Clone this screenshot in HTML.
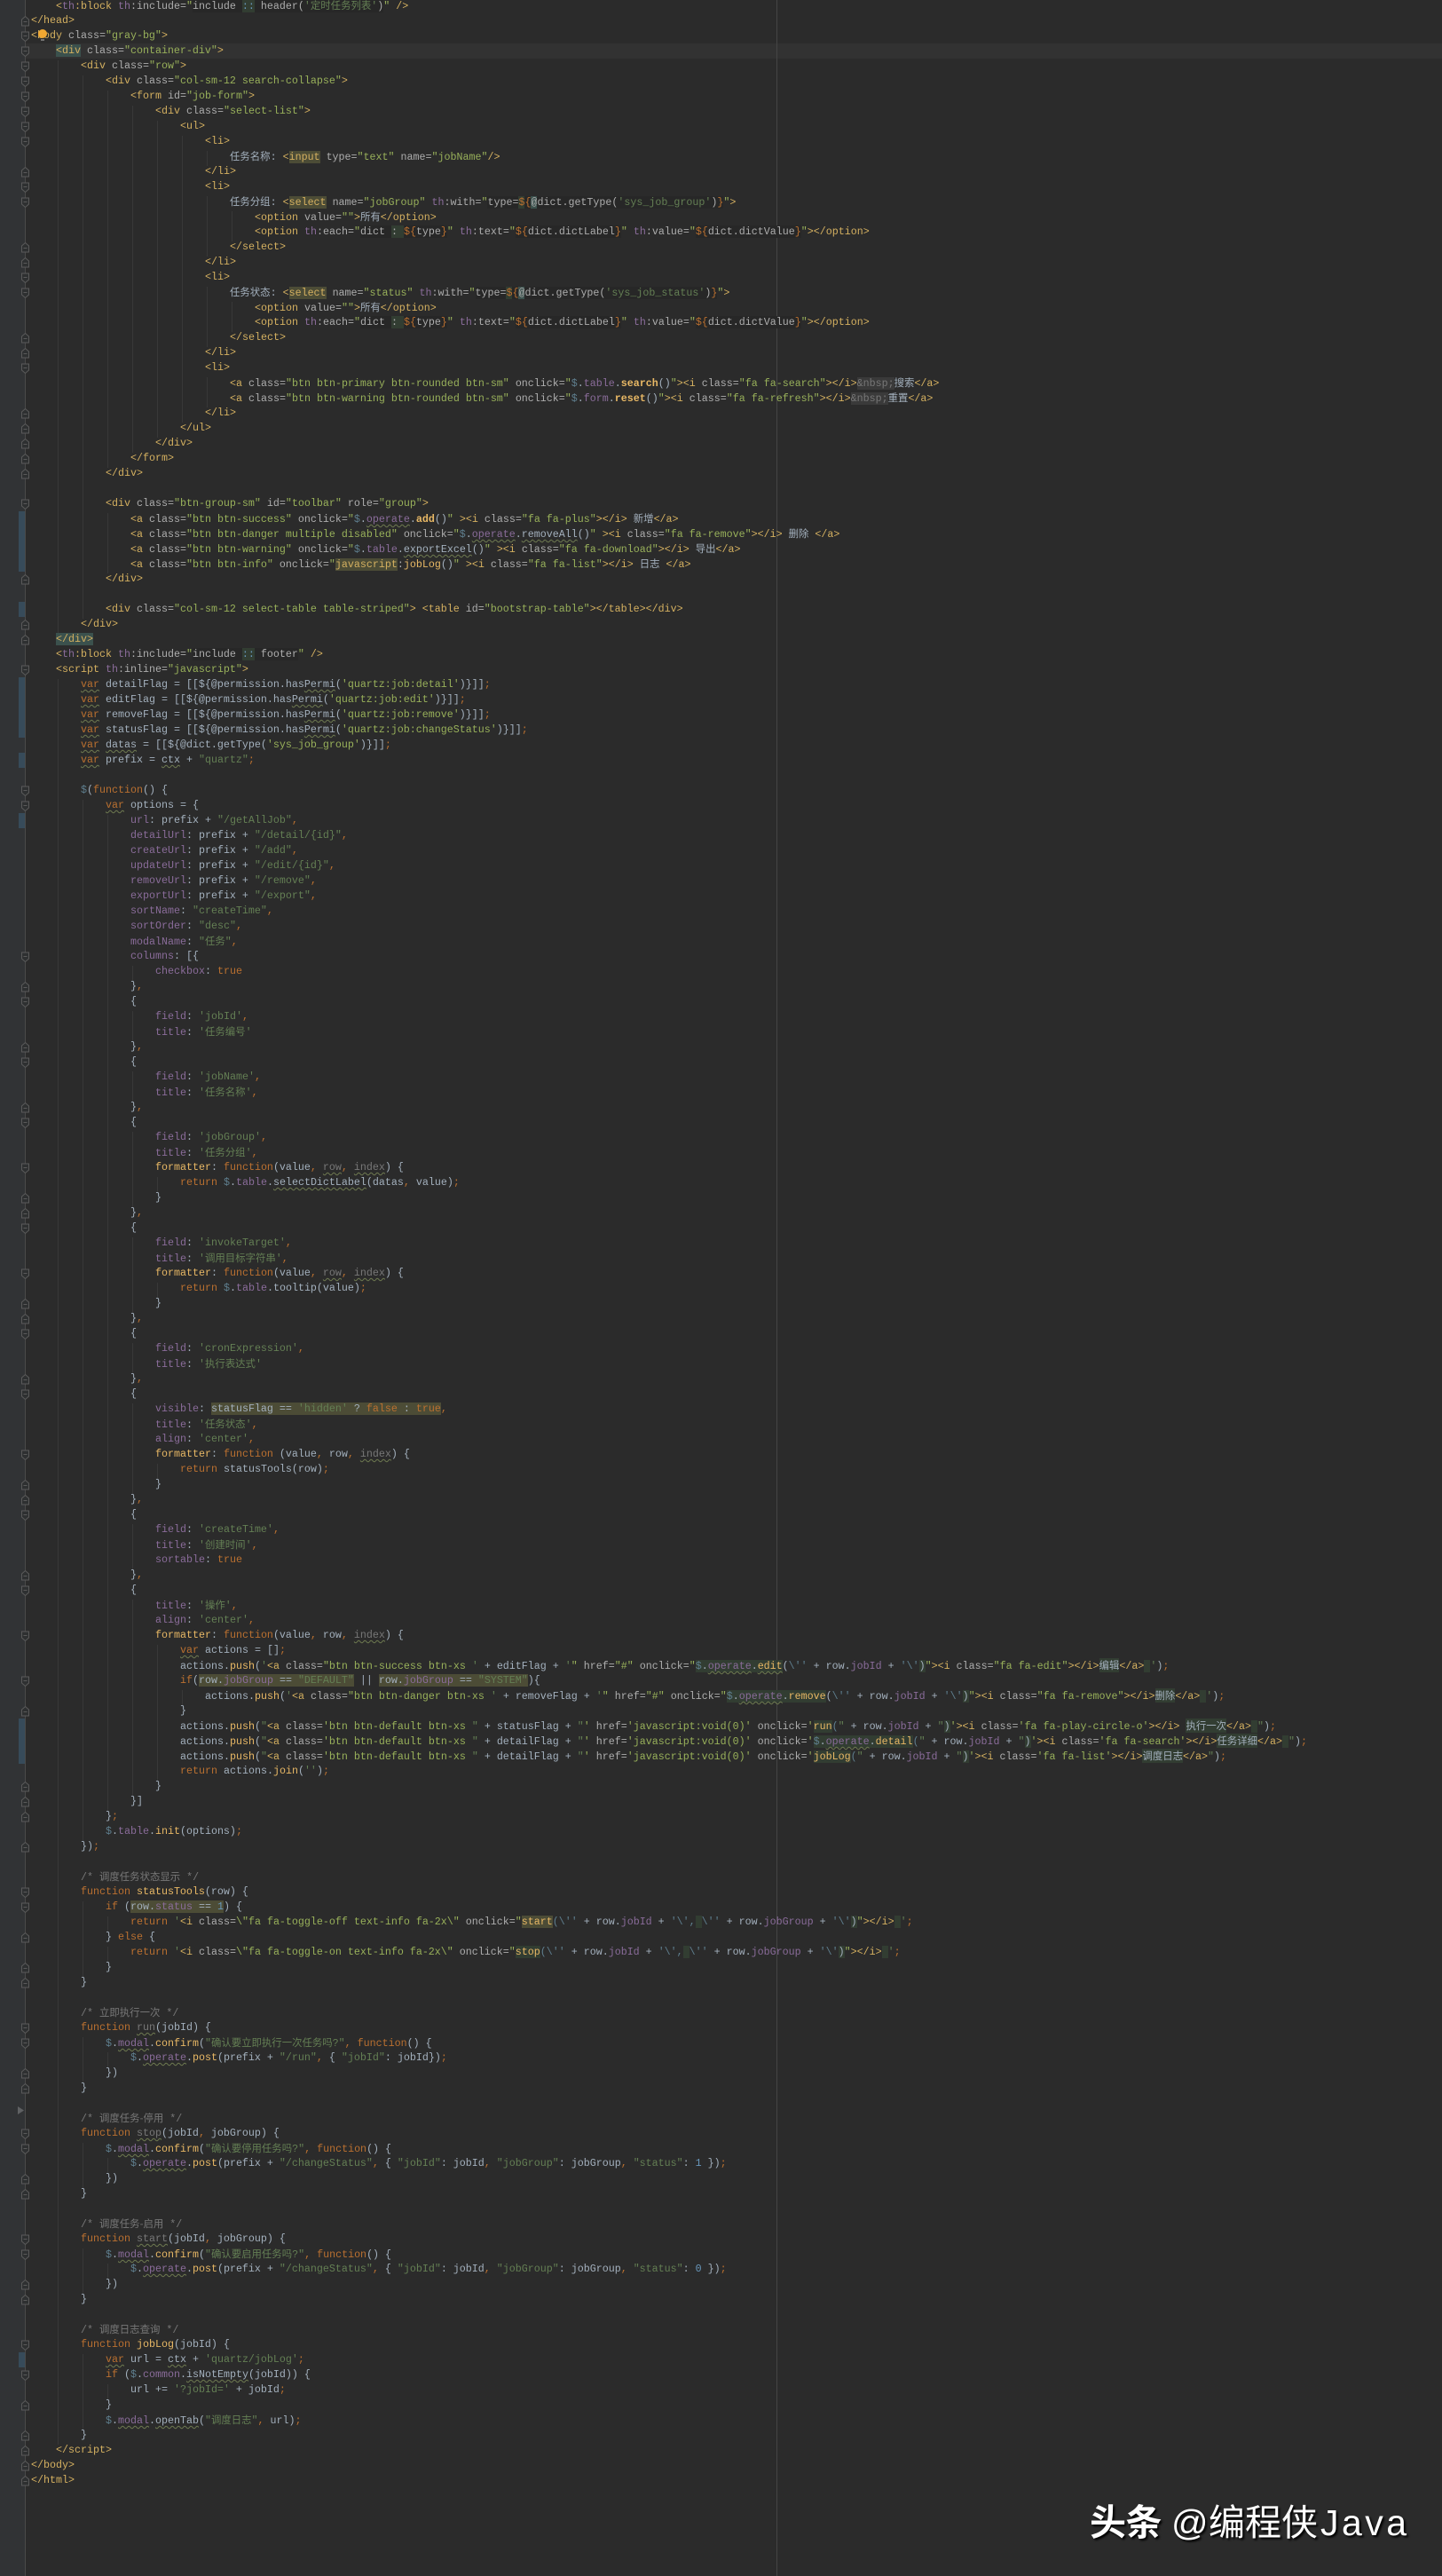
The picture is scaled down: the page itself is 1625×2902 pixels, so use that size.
<!DOCTYPE html>
<html lang="zh-CN"><head><meta charset="utf-8"><title>代码编辑器</title>
<style>
html,body{margin:0;padding:0;background:#2b2b2b}
#r{position:relative;width:1625px;height:2902px;overflow:hidden;background:#2b2b2b}
#code{position:absolute;left:35px;top:-2px;width:1590px;font:11.67px/17px "Liberation Mono","Noto Sans CJK SC",monospace;color:#a3b0bd}
p{margin:0;height:17px;white-space:pre}
i{font-style:normal}
.x4{padding-left:28px}.x8{padding-left:56px}.x12{padding-left:84px}.x16{padding-left:112px}.x20{padding-left:140px}.x24{padding-left:168px}.x28{padding-left:196px}.x32{padding-left:224px}.x36{padding-left:252px}
.z{font-size:11.4px;font-family:"Noto Sans CJK SC",sans-serif}
.t{color:#d4b060}.a{color:#adadad}.s{color:#98b05a}.g{color:#647f54}.k{color:#ba7030}.p{color:#8a6c9a}.m{color:#e8b865}.c{color:#777}.n{color:#6897bb}.y{color:#5f7f8f}
.o{background:#4c4c36}.h{background:#323d32}.d{background:#272727}.b{background:#3b514d}.e{background:#3a3a3a}
.w{text-decoration:underline wavy #6e7a50 1px;text-underline-offset:2px}
.q{font-weight:bold}
.rc{position:absolute}
#wm{position:absolute;left:0;top:0;color:#fff;text-shadow:2px 2px 2px #000;font-family:"Liberation Sans","Noto Sans CJK SC",sans-serif;font-size:41px;line-height:50px;white-space:pre}
#wm span{position:absolute;top:2817px}
</style></head><body><div id="r">
<div class="rc" style="left:0;top:0;width:28px;height:2902px;background:#313335"></div>
<div class="rc" style="left:28px;top:49px;width:1597px;height:17px;background:#323232"></div>
<div class="rc" style="left:21px;top:576px;width:7px;height:68px;background:#374b5a"></div>
<div class="rc" style="left:21px;top:678px;width:7px;height:17px;background:#374b5a"></div>
<div class="rc" style="left:21px;top:763px;width:7px;height:68px;background:#374b5a"></div>
<div class="rc" style="left:21px;top:848px;width:7px;height:17px;background:#374b5a"></div>
<div class="rc" style="left:21px;top:916px;width:7px;height:17px;background:#374b5a"></div>
<div class="rc" style="left:21px;top:1936px;width:7px;height:51px;background:#374b5a"></div>
<div class="rc" style="left:21px;top:2650px;width:7px;height:17px;background:#374b5a"></div>
<div class="rc" style="left:875px;top:0;width:1px;height:2902px;background:#454545"></div>
<svg class="rc" style="left:0;top:0" width="1625" height="2902" viewBox="0 0 1625 2902">
<defs>
<g id="s"><path d="M24.500 2h8v7l-4 3.500-4-3.500z" fill="#2e3031" stroke="#5a5a5a"/><path d="M26.500 6.500h4" stroke="#5a5a5a"/></g>
<g id="f"><path d="M24.500 5l4-3.500 4 3.500v7h-8z" fill="#2e3031" stroke="#5a5a5a"/><path d="M26.500 7.500h4" stroke="#5a5a5a"/></g>
</defs>
<path d="M28.500 0V2902" stroke="#4a4a4a" fill="none"/>
<path stroke="#383838" fill="none" d="M65.500 68V714M65.500 765V2754M93.500 85V697M93.500 901V2074M93.500 2142V2227M93.500 2295V2346M93.500 2414V2465M93.500 2533V2584M93.500 2652V2737M121.500 102V527M121.500 578V646M121.500 918V2040M121.500 2159V2176M121.500 2193V2210M121.500 2312V2329M121.500 2431V2448M121.500 2550V2567M121.500 2686V2703M149.500 119V510M149.500 1088V1105M149.500 1139V1173M149.500 1207V1241M149.500 1275V1360M149.500 1394V1479M149.500 1513V1547M149.500 1581V1683M149.500 1717V1768M149.500 1802V2023M177.500 136V493M177.500 1326V1343M177.500 1445V1462M177.500 1649V1666M177.500 1853V2006M205.500 153V476M205.500 1904V1921M233.500 170V187M233.500 221V289M233.500 323V391M233.500 425V459M261.500 238V272M261.500 340V374"/>
<use href="#s" y="34"/><use href="#s" y="51"/><use href="#s" y="68"/><use href="#s" y="85"/><use href="#s" y="102"/><use href="#s" y="119"/><use href="#s" y="136"/><use href="#s" y="153"/><use href="#s" y="204"/><use href="#s" y="221"/><use href="#s" y="306"/><use href="#s" y="323"/><use href="#s" y="408"/><use href="#s" y="561"/><use href="#s" y="748"/><use href="#s" y="884"/><use href="#s" y="901"/><use href="#s" y="1071"/><use href="#s" y="1122"/><use href="#s" y="1190"/><use href="#s" y="1258"/><use href="#s" y="1309"/><use href="#s" y="1377"/><use href="#s" y="1428"/><use href="#s" y="1496"/><use href="#s" y="1564"/><use href="#s" y="1632"/><use href="#s" y="1700"/><use href="#s" y="1785"/><use href="#s" y="1836"/><use href="#s" y="1887"/><use href="#s" y="2125"/><use href="#s" y="2142"/><use href="#s" y="2278"/><use href="#s" y="2295"/><use href="#s" y="2397"/><use href="#s" y="2414"/><use href="#s" y="2516"/><use href="#s" y="2533"/><use href="#s" y="2635"/><use href="#s" y="2669"/>
<use href="#f" y="17"/><use href="#f" y="187"/><use href="#f" y="272"/><use href="#f" y="289"/><use href="#f" y="374"/><use href="#f" y="391"/><use href="#f" y="459"/><use href="#f" y="476"/><use href="#f" y="493"/><use href="#f" y="510"/><use href="#f" y="527"/><use href="#f" y="646"/><use href="#f" y="697"/><use href="#f" y="714"/><use href="#f" y="1105"/><use href="#f" y="1173"/><use href="#f" y="1241"/><use href="#f" y="1343"/><use href="#f" y="1360"/><use href="#f" y="1462"/><use href="#f" y="1479"/><use href="#f" y="1547"/><use href="#f" y="1666"/><use href="#f" y="1683"/><use href="#f" y="1768"/><use href="#f" y="1921"/><use href="#f" y="2006"/><use href="#f" y="2023"/><use href="#f" y="2040"/><use href="#f" y="2074"/><use href="#f" y="2176"/><use href="#f" y="2210"/><use href="#f" y="2227"/><use href="#f" y="2329"/><use href="#f" y="2346"/><use href="#f" y="2448"/><use href="#f" y="2465"/><use href="#f" y="2567"/><use href="#f" y="2584"/><use href="#f" y="2703"/><use href="#f" y="2737"/><use href="#f" y="2754"/><use href="#f" y="2771"/><use href="#f" y="2788"/>
<path d="M20 2373l7 4.500-7 4.500z" fill="#5f6163"/>
</svg>
<div id="code">
<p class="x4"><i class=t>&lt;</i><i class=p>th</i><i class=t>:block</i> <i class=p>th</i><i class=a>:include=</i><i class=s>"</i><i class="a d">include </i><i class="n h">::</i><i class="a d"> header(</i><i class="g d">'<i class=z>定时任务列表</i>'</i><i class="a d">)</i><i class=s>"</i> <i class=t>/&gt;</i></p>
<p><i class=t>&lt;/head&gt;</i></p>
<p><i class=t>&lt;body</i> <i class=a>class=</i><i class=s>"gray-bg"</i><i class=t>&gt;</i></p>
<p class="x4"><i class="t b">&lt;div</i> <i class=a>class=</i><i class=s>"container-div"</i><i class=t>&gt;</i></p>
<p class="x8"><i class=t>&lt;div</i> <i class=a>class=</i><i class=s>"row"</i><i class=t>&gt;</i></p>
<p class="x12"><i class=t>&lt;div</i> <i class=a>class=</i><i class=s>"col-sm-12 search-collapse"</i><i class=t>&gt;</i></p>
<p class="x16"><i class=t>&lt;form</i> <i class=a>id=</i><i class=s>"job-form"</i><i class=t>&gt;</i></p>
<p class="x20"><i class=t>&lt;div</i> <i class=a>class=</i><i class=s>"select-list"</i><i class=t>&gt;</i></p>
<p class="x24"><i class=t>&lt;ul&gt;</i></p>
<p class="x28"><i class=t>&lt;li&gt;</i></p>
<p class="x32"><i class=z>任务名称</i>: <i class=t>&lt;</i><i class="t o">input</i> <i class=a>type=</i><i class=s>"text"</i> <i class=a>name=</i><i class=s>"jobName"</i><i class=t>/&gt;</i></p>
<p class="x28"><i class=t>&lt;/li&gt;</i></p>
<p class="x28"><i class=t>&lt;li&gt;</i></p>
<p class="x32"><i class=z>任务分组</i>: <i class=t>&lt;</i><i class="t o">select</i> <i class=a>name=</i><i class=s>"jobGroup"</i> <i class=p>th</i><i class=a>:with=</i><i class=s>"</i><i class="a d">type=</i><i class="k h">$</i><i class="k d">{</i><i class="a b">@</i><i class="a d">dict.getType(</i><i class="g d">'sys_job_group'</i><i class="a d">)</i><i class="k d">}</i><i class=s>"</i><i class=t>&gt;</i></p>
<p class="x36"><i class=t>&lt;option</i> <i class=a>value=</i><i class=s>""</i><i class=t>&gt;</i><i class=z>所有</i><i class=t>&lt;/option&gt;</i></p>
<p class="x36"><i class=t>&lt;option</i> <i class=p>th</i><i class=a>:each=</i><i class=s>"</i><i class="a d">dict </i><i class="a h">:</i><i class="h"> </i><i class="k d">$</i><i class="k d">{</i><i class="a d">type</i><i class="k d">}</i><i class=s>"</i> <i class=p>th</i><i class=a>:text=</i><i class=s>"</i><i class="k d">${</i><i class="a d">dict.dictLabel</i><i class="k d">}</i><i class=s>"</i> <i class=p>th</i><i class=a>:value=</i><i class=s>"</i><i class="k d">${</i><i class="a d">dict.dictValue</i><i class="k d">}</i><i class=s>"</i><i class=t>&gt;&lt;/option&gt;</i></p>
<p class="x32"><i class=t>&lt;/select&gt;</i></p>
<p class="x28"><i class=t>&lt;/li&gt;</i></p>
<p class="x28"><i class=t>&lt;li&gt;</i></p>
<p class="x32"><i class=z>任务状态</i>: <i class=t>&lt;</i><i class="t o">select</i> <i class=a>name=</i><i class=s>"status"</i> <i class=p>th</i><i class=a>:with=</i><i class=s>"</i><i class="a d">type=</i><i class="k h">$</i><i class="k d">{</i><i class="a b">@</i><i class="a d">dict.getType(</i><i class="g d">'sys_job_status'</i><i class="a d">)</i><i class="k d">}</i><i class=s>"</i><i class=t>&gt;</i></p>
<p class="x36"><i class=t>&lt;option</i> <i class=a>value=</i><i class=s>""</i><i class=t>&gt;</i><i class=z>所有</i><i class=t>&lt;/option&gt;</i></p>
<p class="x36"><i class=t>&lt;option</i> <i class=p>th</i><i class=a>:each=</i><i class=s>"</i><i class="a d">dict </i><i class="a h">:</i><i class="h"> </i><i class="k d">$</i><i class="k d">{</i><i class="a d">type</i><i class="k d">}</i><i class=s>"</i> <i class=p>th</i><i class=a>:text=</i><i class=s>"</i><i class="k d">${</i><i class="a d">dict.dictLabel</i><i class="k d">}</i><i class=s>"</i> <i class=p>th</i><i class=a>:value=</i><i class=s>"</i><i class="k d">${</i><i class="a d">dict.dictValue</i><i class="k d">}</i><i class=s>"</i><i class=t>&gt;&lt;/option&gt;</i></p>
<p class="x32"><i class=t>&lt;/select&gt;</i></p>
<p class="x28"><i class=t>&lt;/li&gt;</i></p>
<p class="x28"><i class=t>&lt;li&gt;</i></p>
<p class="x32"><i class=t>&lt;a</i> <i class=a>class=</i><i class=s>"btn btn-primary btn-rounded btn-sm"</i> <i class=a>onclick=</i><i class=s>"</i><i class=y>$</i>.<i class=p>table</i>.<i class="m q">search</i>()<i class=s>"</i><i class=t>&gt;&lt;i</i> <i class=a>class=</i><i class=s>"fa fa-search"</i><i class=t>&gt;&lt;/i&gt;</i><i class="e c">&amp;nbsp;</i><i class=z>搜索</i><i class=t>&lt;/a&gt;</i></p>
<p class="x32"><i class=t>&lt;a</i> <i class=a>class=</i><i class=s>"btn btn-warning btn-rounded btn-sm"</i> <i class=a>onclick=</i><i class=s>"</i><i class=y>$</i>.<i class=p>form</i>.<i class="m q">reset</i>()<i class=s>"</i><i class=t>&gt;&lt;i</i> <i class=a>class=</i><i class=s>"fa fa-refresh"</i><i class=t>&gt;&lt;/i&gt;</i><i class="e c">&amp;nbsp;</i><i class=z>重置</i><i class=t>&lt;/a&gt;</i></p>
<p class="x28"><i class=t>&lt;/li&gt;</i></p>
<p class="x24"><i class=t>&lt;/ul&gt;</i></p>
<p class="x20"><i class=t>&lt;/div&gt;</i></p>
<p class="x16"><i class=t>&lt;/form&gt;</i></p>
<p class="x12"><i class=t>&lt;/div&gt;</i></p>
<p></p>
<p class="x12"><i class=t>&lt;div</i> <i class=a>class=</i><i class=s>"btn-group-sm"</i> <i class=a>id=</i><i class=s>"toolbar"</i> <i class=a>role=</i><i class=s>"group"</i><i class=t>&gt;</i></p>
<p class="x16"><i class=t>&lt;a</i> <i class=a>class=</i><i class=s>"btn btn-success"</i> <i class=a>onclick=</i><i class=s>"</i><i class=y>$</i>.<i class="p w">operate</i>.<i class="m q">add</i>()<i class=s>"</i> <i class=t>&gt;&lt;i</i> <i class=a>class=</i><i class=s>"fa fa-plus"</i><i class=t>&gt;&lt;/i&gt;</i> <i class=z>新增</i><i class=t>&lt;/a&gt;</i></p>
<p class="x16"><i class=t>&lt;a</i> <i class=a>class=</i><i class=s>"btn btn-danger multiple disabled"</i> <i class=a>onclick=</i><i class=s>"</i><i class=y>$</i>.<i class="p w">operate</i>.<i class="w">removeAll</i>()<i class=s>"</i> <i class=t>&gt;&lt;i</i> <i class=a>class=</i><i class=s>"fa fa-remove"</i><i class=t>&gt;&lt;/i&gt;</i> <i class=z>删除</i> <i class=t>&lt;/a&gt;</i></p>
<p class="x16"><i class=t>&lt;a</i> <i class=a>class=</i><i class=s>"btn btn-warning"</i> <i class=a>onclick=</i><i class=s>"</i><i class=y>$</i>.<i class=p>table</i>.<i class="w">exportExcel</i>()<i class=s>"</i> <i class=t>&gt;&lt;i</i> <i class=a>class=</i><i class=s>"fa fa-download"</i><i class=t>&gt;&lt;/i&gt;</i> <i class=z>导出</i><i class=t>&lt;/a&gt;</i></p>
<p class="x16"><i class=t>&lt;a</i> <i class=a>class=</i><i class=s>"btn btn-info"</i> <i class=a>onclick=</i><i class=s>"</i><i class="t o">javascript</i><i class=a>:</i><i class=m>jobLog</i>()<i class=s>"</i> <i class=t>&gt;&lt;i</i> <i class=a>class=</i><i class=s>"fa fa-list"</i><i class=t>&gt;&lt;/i&gt;</i> <i class=z>日志</i> <i class=t>&lt;/a&gt;</i></p>
<p class="x12"><i class=t>&lt;/div&gt;</i></p>
<p></p>
<p class="x12"><i class=t>&lt;div</i> <i class=a>class=</i><i class=s>"col-sm-12 select-table table-striped"</i><i class=t>&gt;</i> <i class=t>&lt;table</i> <i class=a>id=</i><i class=s>"bootstrap-table"</i><i class=t>&gt;&lt;/table&gt;&lt;/div&gt;</i></p>
<p class="x8"><i class=t>&lt;/div&gt;</i></p>
<p class="x4"><i class="t b">&lt;/div&gt;</i></p>
<p class="x4"><i class=t>&lt;</i><i class=p>th</i><i class=t>:block</i> <i class=p>th</i><i class=a>:include=</i><i class=s>"</i><i class="a d">include </i><i class="n h">::</i><i class="a d"> footer</i><i class=s>"</i> <i class=t>/&gt;</i></p>
<p class="x4"><i class=t>&lt;script</i> <i class=p>th</i><i class=a>:inline=</i><i class=s>"javascript"</i><i class=t>&gt;</i></p>
<p class="x8"><i class="k w">var</i> detailFlag = [[${@permission.has<i class="w">Permi</i>(<i class=s>'quartz:job:detail'</i>)}]]<i class=k>;</i></p>
<p class="x8"><i class="k w">var</i> editFlag = [[${@permission.has<i class="w">Permi</i>(<i class=s>'quartz:job:edit'</i>)}]]<i class=k>;</i></p>
<p class="x8"><i class="k w">var</i> removeFlag = [[${@permission.has<i class="w">Permi</i>(<i class=s>'quartz:job:remove'</i>)}]]<i class=k>;</i></p>
<p class="x8"><i class="k w">var</i> statusFlag = [[${@permission.has<i class="w">Permi</i>(<i class=s>'quartz:job:changeStatus'</i>)}]]<i class=k>;</i></p>
<p class="x8"><i class="k w">var</i> <i class=w>datas</i> = [[${@dict.getType(<i class=s>'sys_job_group'</i>)}]]<i class=k>;</i></p>
<p class="x8"><i class="k w">var</i> prefix = <i class=w>ctx</i> + <i class=g>"quartz"</i><i class=k>;</i></p>
<p></p>
<p class="x8"><i class=y>$</i>(<i class=k>function</i>() {</p>
<p class="x12"><i class="k w">var</i> options = {</p>
<p class="x16"><i class=p>url</i>: prefix + <i class=g>"/getAllJob"</i><i class=k>,</i></p>
<p class="x16"><i class=p>detailUrl</i>: prefix + <i class=g>"/detail/{id}"</i><i class=k>,</i></p>
<p class="x16"><i class=p>createUrl</i>: prefix + <i class=g>"/add"</i><i class=k>,</i></p>
<p class="x16"><i class=p>updateUrl</i>: prefix + <i class=g>"/edit/{id}"</i><i class=k>,</i></p>
<p class="x16"><i class=p>removeUrl</i>: prefix + <i class=g>"/remove"</i><i class=k>,</i></p>
<p class="x16"><i class=p>exportUrl</i>: prefix + <i class=g>"/export"</i><i class=k>,</i></p>
<p class="x16"><i class=p>sortName</i>: <i class=g>"createTime"</i><i class=k>,</i></p>
<p class="x16"><i class=p>sortOrder</i>: <i class=g>"desc"</i><i class=k>,</i></p>
<p class="x16"><i class=p>modalName</i>: <i class=g>"<i class=z>任务</i>"</i><i class=k>,</i></p>
<p class="x16"><i class=p>columns</i>: [{</p>
<p class="x20"><i class=p>checkbox</i>: <i class=k>true</i></p>
<p class="x16">}<i class=k>,</i></p>
<p class="x16">{</p>
<p class="x20"><i class=p>field</i>: <i class=g>'jobId'</i><i class=k>,</i></p>
<p class="x20"><i class=p>title</i>: <i class=g>'<i class=z>任务编号</i>'</i></p>
<p class="x16">}<i class=k>,</i></p>
<p class="x16">{</p>
<p class="x20"><i class=p>field</i>: <i class=g>'jobName'</i><i class=k>,</i></p>
<p class="x20"><i class=p>title</i>: <i class=g>'<i class=z>任务名称</i>'</i><i class=k>,</i></p>
<p class="x16">}<i class=k>,</i></p>
<p class="x16">{</p>
<p class="x20"><i class=p>field</i>: <i class=g>'jobGroup'</i><i class=k>,</i></p>
<p class="x20"><i class=p>title</i>: <i class=g>'<i class=z>任务分组</i>'</i><i class=k>,</i></p>
<p class="x20"><i class=m>formatter</i>: <i class=k>function</i>(value<i class=k>,</i> <i class="c w">row</i><i class=k>,</i> <i class="c w">index</i>) {</p>
<p class="x24"><i class=k>return</i> <i class=y>$</i>.<i class=p>table</i>.<i class=w>selectDictLabel</i>(datas<i class=k>,</i> value)<i class=k>;</i></p>
<p class="x20">}</p>
<p class="x16">}<i class=k>,</i></p>
<p class="x16">{</p>
<p class="x20"><i class=p>field</i>: <i class=g>'invokeTarget'</i><i class=k>,</i></p>
<p class="x20"><i class=p>title</i>: <i class=g>'<i class=z>调用目标字符串</i>'</i><i class=k>,</i></p>
<p class="x20"><i class=m>formatter</i>: <i class=k>function</i>(value<i class=k>,</i> <i class="c w">row</i><i class=k>,</i> <i class="c w">index</i>) {</p>
<p class="x24"><i class=k>return</i> <i class=y>$</i>.<i class=p>table</i>.tooltip(value)<i class=k>;</i></p>
<p class="x20">}</p>
<p class="x16">}<i class=k>,</i></p>
<p class="x16">{</p>
<p class="x20"><i class=p>field</i>: <i class=g>'cronExpression'</i><i class=k>,</i></p>
<p class="x20"><i class=p>title</i>: <i class=g>'<i class=z>执行表达式</i>'</i></p>
<p class="x16">}<i class=k>,</i></p>
<p class="x16">{</p>
<p class="x20"><i class=p>visible</i>: <i class=o>statusFlag == <i class=g>'hidden'</i> ? <i class=k>false</i> : <i class=k>true</i></i><i class=k>,</i></p>
<p class="x20"><i class=p>title</i>: <i class=g>'<i class=z>任务状态</i>'</i><i class=k>,</i></p>
<p class="x20"><i class=p>align</i>: <i class=g>'center'</i><i class=k>,</i></p>
<p class="x20"><i class=m>formatter</i>: <i class=k>function</i> (value<i class=k>,</i> row<i class=k>,</i> <i class="c w">index</i>) {</p>
<p class="x24"><i class=k>return</i> statusTools(row)<i class=k>;</i></p>
<p class="x20">}</p>
<p class="x16">}<i class=k>,</i></p>
<p class="x16">{</p>
<p class="x20"><i class=p>field</i>: <i class=g>'createTime'</i><i class=k>,</i></p>
<p class="x20"><i class=p>title</i>: <i class=g>'<i class=z>创建时间</i>'</i><i class=k>,</i></p>
<p class="x20"><i class=p>sortable</i>: <i class=k>true</i></p>
<p class="x16">}<i class=k>,</i></p>
<p class="x16">{</p>
<p class="x20"><i class=p>title</i>: <i class=g>'<i class=z>操作</i>'</i><i class=k>,</i></p>
<p class="x20"><i class=p>align</i>: <i class=g>'center'</i><i class=k>,</i></p>
<p class="x20"><i class=m>formatter</i>: <i class=k>function</i>(value<i class=k>,</i> row<i class=k>,</i> <i class="c w">index</i>) {</p>
<p class="x24"><i class="k w">var</i> actions = []<i class=k>;</i></p>
<p class="x24">actions.<i class=m>push</i>(<i class=g>'</i><i class=t>&lt;a</i> <i class=a>class=</i><i class=s>"btn btn-success btn-xs </i><i class=g>'</i> + editFlag + <i class=g>'</i><i class=s>"</i> <i class=a>href=</i><i class=s>"#"</i> <i class=a>onclick=</i><i class=s>"</i><i class=h><i class=y>$</i>.<i class="p w">operate</i>.<i class="m w">edit</i></i>(<i class=y>\''</i> + row.<i class=p>jobId</i> + <i class=y>'\'</i><i class=h>)</i><i class=s>"</i><i class=t>&gt;&lt;i</i> <i class=a>class=</i><i class=s>"fa fa-edit"</i><i class=t>&gt;&lt;/i&gt;</i><i class="z h">编辑</i><i class=t>&lt;/a&gt;</i><i class=h> </i><i class=g>'</i>)<i class=k>;</i></p>
<p class="x24"><i class=k>if</i>(<i class=o>row.<i class=p>jobGroup</i> == <i class=g>"DEFAULT"</i></i> || <i class=o>row.<i class=p>jobGroup</i> == <i class=g>"SYSTEM"</i></i>){</p>
<p class="x28">actions.<i class=m>push</i>(<i class=g>'</i><i class=t>&lt;a</i> <i class=a>class=</i><i class=s>"btn btn-danger btn-xs </i><i class=g>'</i> + removeFlag + <i class=g>'</i><i class=s>"</i> <i class=a>href=</i><i class=s>"#"</i> <i class=a>onclick=</i><i class=s>"</i><i class=h><i class=y>$</i>.<i class="p w">operate</i>.<i class=m>remove</i></i>(<i class=y>\''</i> + row.<i class=p>jobId</i> + <i class=y>'\'</i><i class=h>)</i><i class=s>"</i><i class=t>&gt;&lt;i</i> <i class=a>class=</i><i class=s>"fa fa-remove"</i><i class=t>&gt;&lt;/i&gt;</i><i class="z h">删除</i><i class=t>&lt;/a&gt;</i><i class=h> </i><i class=g>'</i>)<i class=k>;</i></p>
<p class="x24">}</p>
<p class="x24">actions.<i class=m>push</i>(<i class=g>"</i><i class=t>&lt;a</i> <i class=a>class=</i><i class=s>'btn btn-default btn-xs </i><i class=g>"</i> + statusFlag + <i class=g>"</i><i class=s>'</i> <i class=a>href=</i><i class=s>'javascript:void(0)'</i> <i class=a>onclick=</i><i class=s>'</i><i class="m h">run</i><i class=y>(</i><i class=g>"</i> + row.<i class=p>jobId</i> + <i class=g>"</i><i class=h>)</i><i class=s>'</i><i class=t>&gt;&lt;i</i> <i class=a>class=</i><i class=s>'fa fa-play-circle-o'</i><i class=t>&gt;&lt;/i&gt;</i> <i class="z h">执行一次</i><i class=t>&lt;/a&gt;</i><i class=h> </i><i class=g>"</i>)<i class=k>;</i></p>
<p class="x24">actions.<i class=m>push</i>(<i class=g>"</i><i class=t>&lt;a</i> <i class=a>class=</i><i class=s>'btn btn-default btn-xs </i><i class=g>"</i> + detailFlag + <i class=g>"</i><i class=s>'</i> <i class=a>href=</i><i class=s>'javascript:void(0)'</i> <i class=a>onclick=</i><i class=s>'</i><i class=h><i class=y>$</i>.<i class="p w">operate</i>.<i class=m>detail</i></i><i class=y>(</i><i class=g>"</i> + row.<i class=p>jobId</i> + <i class=g>"</i><i class=h>)</i><i class=s>'</i><i class=t>&gt;&lt;i</i> <i class=a>class=</i><i class=s>'fa fa-search'</i><i class=t>&gt;&lt;/i&gt;</i><i class="z h">任务详细</i><i class=t>&lt;/a&gt;</i><i class=h> </i><i class=g>"</i>)<i class=k>;</i></p>
<p class="x24">actions.<i class=m>push</i>(<i class=g>"</i><i class=t>&lt;a</i> <i class=a>class=</i><i class=s>'btn btn-default btn-xs </i><i class=g>"</i> + detailFlag + <i class=g>"</i><i class=s>'</i> <i class=a>href=</i><i class=s>'javascript:void(0)'</i> <i class=a>onclick=</i><i class=s>'</i><i class="m h">jobLog</i><i class=y>(</i><i class=g>"</i> + row.<i class=p>jobId</i> + <i class=g>"</i><i class=h>)</i><i class=s>'</i><i class=t>&gt;&lt;i</i> <i class=a>class=</i><i class=s>'fa fa-list'</i><i class=t>&gt;&lt;/i&gt;</i><i class="z h">调度日志</i><i class=t>&lt;/a&gt;</i><i class=g>"</i>)<i class=k>;</i></p>
<p class="x24"><i class=k>return</i> actions.<i class=m>join</i>(<i class=g>''</i>)<i class=k>;</i></p>
<p class="x20">}</p>
<p class="x16">}]</p>
<p class="x12">}<i class=k>;</i></p>
<p class="x12"><i class=y>$</i>.<i class=p>table</i>.<i class=m>init</i>(options)<i class=k>;</i></p>
<p class="x8">})<i class=k>;</i></p>
<p></p>
<p class="x8"><i class=c>/* <i class=z>调度任务状态显示</i> */</i></p>
<p class="x8"><i class=k>function</i> <i class=m>statusTools</i>(row) {</p>
<p class="x12"><i class=k>if</i> (<i class=o>row.<i class=p>status</i> == <i class=n>1</i></i>) {</p>
<p class="x16"><i class=k>return</i> <i class=g>'</i><i class=t>&lt;i</i> <i class=a>class=</i><i class=s>\"fa fa-toggle-off text-info fa-2x\"</i> <i class=a>onclick=</i><i class=s>"</i><i class="m o">start</i><i class=y>(\''</i> + row.<i class=p>jobId</i> + <i class=y>'\',</i><i class=h> </i><i class=y>\''</i> + row.<i class=p>jobGroup</i> + <i class=y>'\'</i><i class=h>)</i><i class=s>"</i><i class=t>&gt;&lt;/i&gt;</i><i class=h> </i><i class=g>'</i><i class=k>;</i></p>
<p class="x12">} <i class=k>else</i> {</p>
<p class="x16"><i class=k>return</i> <i class=g>'</i><i class=t>&lt;i</i> <i class=a>class=</i><i class=s>\"fa fa-toggle-on text-info fa-2x\"</i> <i class=a>onclick=</i><i class=s>"</i><i class="m h">stop</i><i class=y>(\''</i> + row.<i class=p>jobId</i> + <i class=y>'\',</i><i class=h> </i><i class=y>\''</i> + row.<i class=p>jobGroup</i> + <i class=y>'\'</i><i class=h>)</i><i class=s>"</i><i class=t>&gt;&lt;/i&gt;</i><i class=h> </i><i class=g>'</i><i class=k>;</i></p>
<p class="x12">}</p>
<p class="x8">}</p>
<p></p>
<p class="x8"><i class=c>/* <i class=z>立即执行一次</i> */</i></p>
<p class="x8"><i class=k>function</i> <i class="c w">run</i>(jobId) {</p>
<p class="x12"><i class=y>$</i>.<i class="p w">modal</i>.<i class=m>confirm</i>(<i class=g>"<i class=z>确认要立即执行一次任务吗</i>?"</i><i class=k>,</i> <i class=k>function</i>() {</p>
<p class="x16"><i class=y>$</i>.<i class="p w">operate</i>.<i class=m>post</i>(prefix + <i class=g>"/run"</i><i class=k>,</i> { <i class=g>"jobId"</i>: jobId})<i class=k>;</i></p>
<p class="x12">})</p>
<p class="x8">}</p>
<p></p>
<p class="x8"><i class=c>/* <i class=z>调度任务-停用</i> */</i></p>
<p class="x8"><i class=k>function</i> <i class="c w">stop</i>(jobId<i class=k>,</i> jobGroup) {</p>
<p class="x12"><i class=y>$</i>.<i class="p w">modal</i>.<i class=m>confirm</i>(<i class=g>"<i class=z>确认要停用任务吗</i>?"</i><i class=k>,</i> <i class=k>function</i>() {</p>
<p class="x16"><i class=y>$</i>.<i class="p w">operate</i>.<i class=m>post</i>(prefix + <i class=g>"/changeStatus"</i><i class=k>,</i> { <i class=g>"jobId"</i>: jobId<i class=k>,</i> <i class=g>"jobGroup"</i>: jobGroup<i class=k>,</i> <i class=g>"status"</i>: <i class=n>1</i> })<i class=k>;</i></p>
<p class="x12">})</p>
<p class="x8">}</p>
<p></p>
<p class="x8"><i class=c>/* <i class=z>调度任务-启用</i> */</i></p>
<p class="x8"><i class=k>function</i> <i class="c w">start</i>(jobId<i class=k>,</i> jobGroup) {</p>
<p class="x12"><i class=y>$</i>.<i class="p w">modal</i>.<i class=m>confirm</i>(<i class=g>"<i class=z>确认要启用任务吗</i>?"</i><i class=k>,</i> <i class=k>function</i>() {</p>
<p class="x16"><i class=y>$</i>.<i class="p w">operate</i>.<i class=m>post</i>(prefix + <i class=g>"/changeStatus"</i><i class=k>,</i> { <i class=g>"jobId"</i>: jobId<i class=k>,</i> <i class=g>"jobGroup"</i>: jobGroup<i class=k>,</i> <i class=g>"status"</i>: <i class=n>0</i> })<i class=k>;</i></p>
<p class="x12">})</p>
<p class="x8">}</p>
<p></p>
<p class="x8"><i class=c>/* <i class=z>调度日志查询</i> */</i></p>
<p class="x8"><i class=k>function</i> <i class=m>jobLog</i>(jobId) {</p>
<p class="x12"><i class="k w">var</i> url = <i class=w>ctx</i> + <i class=g>'quartz/jobLog'</i><i class=k>;</i></p>
<p class="x12"><i class=k>if</i> (<i class=y>$</i>.<i class=p>common</i>.<i class=w>isNotEmpty</i>(jobId)) {</p>
<p class="x16">url += <i class=g>'?jobId='</i> + jobId<i class=k>;</i></p>
<p class="x12">}</p>
<p class="x12"><i class=y>$</i>.<i class="p w">modal</i>.<i class=w>openTab</i>(<i class=g>"<i class=z>调度日志</i>"</i><i class=k>,</i> url)<i class=k>;</i></p>
<p class="x8">}</p>
<p class="x4"><i class=t>&lt;/script&gt;</i></p>
<p><i class=t>&lt;/body&gt;</i></p>
<p><i class=t>&lt;/html&gt;</i></p>
</div>
<svg class="rc" style="left:0;top:0" width="80" height="60"><circle cx="48" cy="38" r="5" fill="#f0a732"/><path d="M46 45h4" stroke="#bbb"/></svg>
<div id="wm"><span style="left:1228px;font-weight:bold;letter-spacing:-.5px">头条</span><span style="left:1320px;font-family:'Liberation Sans',sans-serif">@</span><span style="left:1362px;">编程侠</span><span style="left:1488px;letter-spacing:3.500px;">Java</span></div>
</div></body></html>
